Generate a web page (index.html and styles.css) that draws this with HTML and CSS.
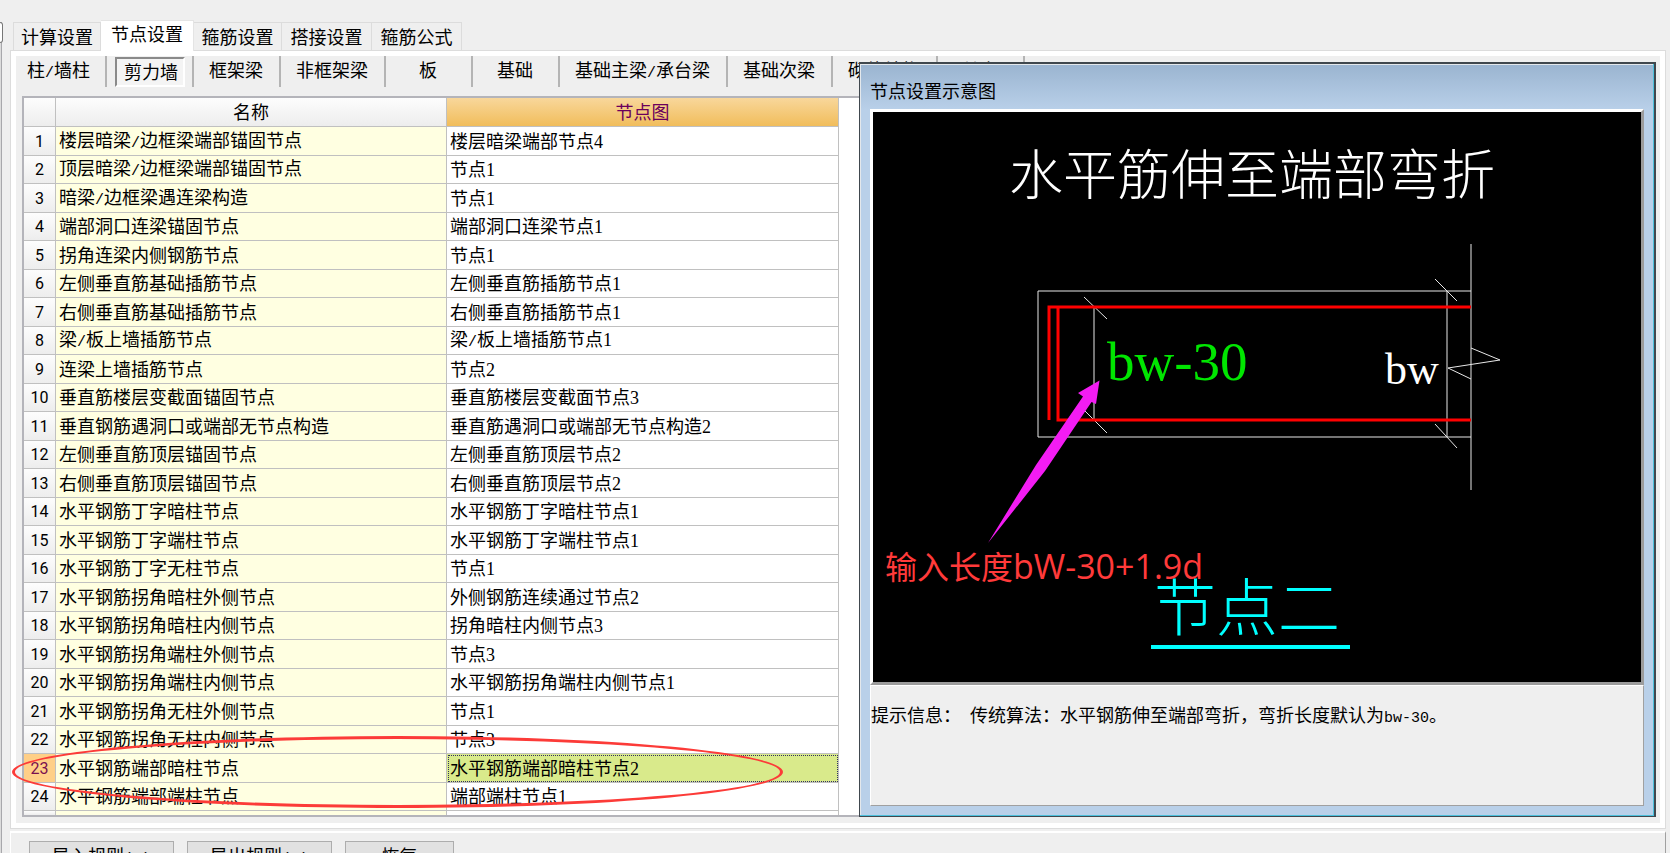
FILE: index.html
```html
<!DOCTYPE html>
<html lang="zh-CN">
<head>
<meta charset="utf-8">
<title>节点设置</title>
<link rel="stylesheet" href="styles.css">
</head>
<body>
<div class="splitter"><div class="splitter-grip"></div></div>
<main class="workspace">
  <nav class="tabs">
    <button class="tab">计算设置</button>
    <button class="tab tab-active">节点设置</button>
    <button class="tab">箍筋设置</button>
    <button class="tab">搭接设置</button>
    <button class="tab">箍筋公式</button>
  </nav>
  <section class="panel">
    <div class="toolbar">
      <div class="tool first"><button>柱<span class="half">/</span>墙柱</button></div>
      <div class="tool holds-pressed"><button class="pressed">剪力墙</button></div>
      <div class="tool"><button>框架梁</button></div>
      <div class="tool"><button>非框架梁</button></div>
      <div class="tool"><button>板</button></div>
      <div class="tool"><button>基础</button></div>
      <div class="tool"><button>基础主梁<span class="half">/</span>承台梁</button></div>
      <div class="tool"><button>基础次梁</button></div>
      <div class="tool"><button>砌体结构</button></div>
      <div class="tool"><button>其它</button></div>
    </div>
    <div class="grid-frame">
      <table class="grid">
        <colgroup><col class="col-no"><col class="col-name"><col class="col-pic"></colgroup>
        <thead><tr><th></th><th>名称</th><th class="current">节点图</th></tr></thead>
        <tbody>
          <tr><th>1</th><td>楼层暗梁<span class="half">/</span>边框梁端部锚固节点</td><td>楼层暗梁端部节点4</td></tr>
          <tr><th>2</th><td>顶层暗梁<span class="half">/</span>边框梁端部锚固节点</td><td>节点1</td></tr>
          <tr><th>3</th><td>暗梁<span class="half">/</span>边框梁遇连梁构造</td><td>节点1</td></tr>
          <tr><th>4</th><td>端部洞口连梁锚固节点</td><td>端部洞口连梁节点1</td></tr>
          <tr><th>5</th><td>拐角连梁内侧钢筋节点</td><td>节点1</td></tr>
          <tr><th>6</th><td>左侧垂直筋基础插筋节点</td><td>左侧垂直筋插筋节点1</td></tr>
          <tr><th>7</th><td>右侧垂直筋基础插筋节点</td><td>右侧垂直筋插筋节点1</td></tr>
          <tr><th>8</th><td>梁<span class="half">/</span>板上墙插筋节点</td><td>梁<span class="half">/</span>板上墙插筋节点1</td></tr>
          <tr><th>9</th><td>连梁上墙插筋节点</td><td>节点2</td></tr>
          <tr><th>10</th><td>垂直筋楼层变截面锚固节点</td><td>垂直筋楼层变截面节点3</td></tr>
          <tr><th>11</th><td>垂直钢筋遇洞口或端部无节点构造</td><td>垂直筋遇洞口或端部无节点构造2</td></tr>
          <tr><th>12</th><td>左侧垂直筋顶层锚固节点</td><td>左侧垂直筋顶层节点2</td></tr>
          <tr><th>13</th><td>右侧垂直筋顶层锚固节点</td><td>右侧垂直筋顶层节点2</td></tr>
          <tr><th>14</th><td>水平钢筋丁字暗柱节点</td><td>水平钢筋丁字暗柱节点1</td></tr>
          <tr><th>15</th><td>水平钢筋丁字端柱节点</td><td>水平钢筋丁字端柱节点1</td></tr>
          <tr><th>16</th><td>水平钢筋丁字无柱节点</td><td>节点1</td></tr>
          <tr><th>17</th><td>水平钢筋拐角暗柱外侧节点</td><td>外侧钢筋连续通过节点2</td></tr>
          <tr><th>18</th><td>水平钢筋拐角暗柱内侧节点</td><td>拐角暗柱内侧节点3</td></tr>
          <tr><th>19</th><td>水平钢筋拐角端柱外侧节点</td><td>节点3</td></tr>
          <tr><th>20</th><td>水平钢筋拐角端柱内侧节点</td><td>水平钢筋拐角端柱内侧节点1</td></tr>
          <tr><th>21</th><td>水平钢筋拐角无柱外侧节点</td><td>节点1</td></tr>
          <tr><th>22</th><td>水平钢筋拐角无柱内侧节点</td><td>节点3</td></tr>
          <tr class="selected"><th>23</th><td>水平钢筋端部暗柱节点</td><td>水平钢筋端部暗柱节点2</td></tr>
          <tr><th>24</th><td>水平钢筋端部端柱节点</td><td>端部端柱节点1</td></tr>
        </tbody>
        <tfoot><tr><th></th><td></td><td></td></tr></tfoot>
      </table>
    </div>
  </section>
  <footer class="actions">
    <button class="wide">导入规则<span class="half">(I)</span></button>
    <button class="wide">导出规则<span class="half">(O)</span></button>
    <button class="narrow">恢复</button>
  </footer>
</main>

<section class="dialog" aria-labelledby="dialog-title">
  <h1 class="dialog-title" id="dialog-title">节点设置示意图</h1>
  <div class="canvas">
    <svg viewBox="873 112 768 570" role="img" aria-label="节点二">
      <text class="cad heading" x="1009" y="195">水平筋伸至端部弯折</text>
      <g class="thin">
        <path d="M1471 291H1038V437H1471"/>
        <path d="M1471 244V490M1447 291V437M1094 307V420"/>
        <path d="M1435 279L1457 301M1435 424L1457 448M1084 297L1107 319M1084 410L1107 433"/>
        <path d="M1471 348L1500 360L1448 368L1471 379"/>
      </g>
      <path class="rebar" d="M1049 420V307H1471M1058 307V420H1471"/>
      <text class="latin green" x="1107" y="380">bw-30</text>
      <text class="latin white" x="1385" y="384">bw</text>
      <path class="arrow" d="M1099.500 380.500L1078 393L1083 396.500L1036 465L988 543L1045 471L1091.500 402L1096 404Z"/>
      <text class="cad cyan" x="1154" y="631">节点二</text>
      <path class="underline" d="M1151 647H1350"/>
      <text class="note" x="885" y="579">输入长度<tspan class="note-latin">bW-30+1.9d</tspan></text>
    </svg>
  </div>
  <p class="message">提示信息：<span class="half"> </span>传统算法：水平钢筋伸至端部弯折，弯折长度默认为<span class="half">bw-30</span>。</p>
</section>
<div class="mark"></div>
</body>
</html>
```

FILE: styles.css
```css
* { box-sizing: border-box; }

body {
  margin: 0;
  min-width: 1200px;
  height: 100vh;
  overflow: hidden;
  position: relative;
  display: flex;
  background: #efefef;
  color: #000;
  font: 18px/24px "Liberation Serif", "Noto Sans CJK SC", sans-serif;
}

button {
  font: inherit;
  color: inherit;
  background: none;
  border: 0;
  padding: 0;
  white-space: nowrap;
}

.half {
  font: 15px/18px "Liberation Mono", monospace;
  white-space: pre;
}

.splitter {
  flex: none;
  width: 2px;
  margin: 22px 8px 0 0;
  background: #dcdcdc;
  border-right: 1px solid #a8a8ac;
}

.splitter-grip {
  width: 3px;
  height: 21px;
  background: #fff;
  border: 1px solid #777;
  border-left: 0;
  border-radius: 0 3px 3px 0;
}

.workspace {
  flex: 1;
  min-width: 0;
  padding: 20px 4px 0 0;
}

.tabs {
  display: flex;
  align-items: flex-end;
  padding-left: 3px;
}

.tab {
  height: 28px;
  width: 90px;
  padding-top: 2px;
  border: 1px solid #dcdcdc;
  border-width: 1px 1px 0 0;
}

.tab:first-child { width: 88px; border-left-width: 1px; }

.tab-active {
  height: 31px;
  width: 93px;
  margin-bottom: -1px;
  padding: 0 0 2px;
  background: #fff;
  border-color: #e4e4e4;
}

.tab-active + .tab { width: 88px; }

.panel {
  border: 1px solid #dcdcdc;
  outline: 5px solid #fff;
  outline-offset: -6px;
  padding: 5px 5px 11px;
  border-right-width: 2px;
}

.toolbar {
  display: flex;
  height: 40px;
  align-items: flex-start;
}

.tool {
  height: 31px;
  min-width: 87px;
  display: flex;
  justify-content: center;
  padding: 1px 16px 0 15px;
  border-right: 2px solid #b4b4b4;
}

.tool.first { padding: 1px 15px 0 11px; }
.tool.holds-pressed { padding: 1px 7px 0 8px; }

.tool button { height: 28px; }

.tool .pressed {
  flex: none;
  width: 70px;
  height: 30px;
  padding: 2px 0 0 2px;
  background: #f4f4f4;
  border: 2px solid;
  border-color: #8a8a8a #fff #fff #8a8a8a;
}

.grid-frame {
  margin: 0 5px 0 6px;
  border: 2px solid #b4b4ba;
  border-width: 2px 1px 2px 2px;
  background: #fff;
}

.grid {
  table-layout: fixed;
  width: 815px;
  border-collapse: separate;
  border-spacing: 0;
}

.col-no { width: 32px; }
.col-name { width: 391px; }
.col-pic { width: 392px; }

.grid th,
.grid td {
  height: 28px;
  padding: 1px 0 0 3px;
  border: 0 solid #c0c0c0;
  border-width: 0 1px 1px 0;
  line-height: 20px;
  text-align: left;
  font-weight: 400;
  white-space: nowrap;
}

.grid tbody tr:nth-child(odd) > * { height: 29px; }

.grid th {
  padding: 1px 0 0;
  text-align: center;
  background: linear-gradient(#fdfdfd, #ededed);
}

.grid thead th { height: 29px; }

.grid tbody th { font-family: Roboto, sans-serif; font-size: 16px; }

.grid td:nth-child(2) { background: #ffffe1; }

.grid thead .current {
  color: #6a005c;
  background: linear-gradient(#f8d79b, #f1bd5b);
}

.grid .selected th { color: #7a1050; background: #ffcf87; }

.grid .selected td:last-child {
  background: #d9ea8b;
  outline: 1px dotted #303060;
  outline-offset: -2px;
}

.grid tfoot tr > * { height: 4px; border-bottom: 0; }

.actions {
  display: flex;
  gap: 13px;
  margin-top: 2px;
  padding: 8px 18px 0;
  border-top: 2px solid #fff;
  border-left: 1px solid #fff;
  border-right: 1px solid #a0a0a0;
}

.actions button {
  height: 32px;
  background: #e1e1e1;
  border: 1px solid #adadad;
}

.actions .wide { width: 145px; }
.actions .narrow { width: 109px; }

.dialog {
  position: absolute;
  left: 859px;
  right: 14px;
  top: 62px;
  padding: 2px 10px 10px;
  border: 2px solid #40484e;
  border-width: 2px 2px 1px 1px;
  box-shadow: inset -1px -1px #4cc0dc, inset 1px 1px #e4e8ec;
  background: linear-gradient(#9ab4d0, #b9d0e9 46px);
}

.dialog-title {
  margin: 0;
  padding: 14px 0 5px;
  font-size: 18px;
  font-weight: 400;
  line-height: 24px;
}

.canvas {
  background: #000;
  border: 3px solid;
  border-color: #fff #9c9c9c #9c9c9c #fff;
}

.canvas svg { display: block; width: 100%; }

.message {
  margin: 0;
  min-height: 121px;
  padding: 18px 0;
  background: #efefef;
  border: 1px solid;
  border-color: #fff #a0a0a0 #a0a0a0 #fff;
}

.thin { fill: none; stroke: #e8e8e8; stroke-width: 1; }
.rebar { fill: none; stroke: #f00; stroke-width: 3; }
.arrow { fill: #f31cf3; }
.underline { stroke: #0ff; stroke-width: 4; }

.cad { font-family: "Noto Sans CJK SC", sans-serif; font-weight: 300; }
.heading { font-size: 54px; fill: #fff; }
.cyan { font-size: 62px; fill: #0ff; }

.latin { font-family: "Liberation Serif", serif; }
.green { font-size: 55px; fill: #00e600; }
.white { font-size: 44px; fill: #fff; }

.note { font: 32px "Noto Sans CJK SC", sans-serif; fill: #ff3a3a; }
.note-latin { font-family: "Open Sans", sans-serif; font-size: 34px; }

/* Ring around the selected row */
.mark {
  position: absolute;
  left: 12px;
  top: 736px;
  width: 771px;
  height: 72px;
  border: 3px solid #fc3b38;
  border-radius: 50%;
  pointer-events: none;
}
```
